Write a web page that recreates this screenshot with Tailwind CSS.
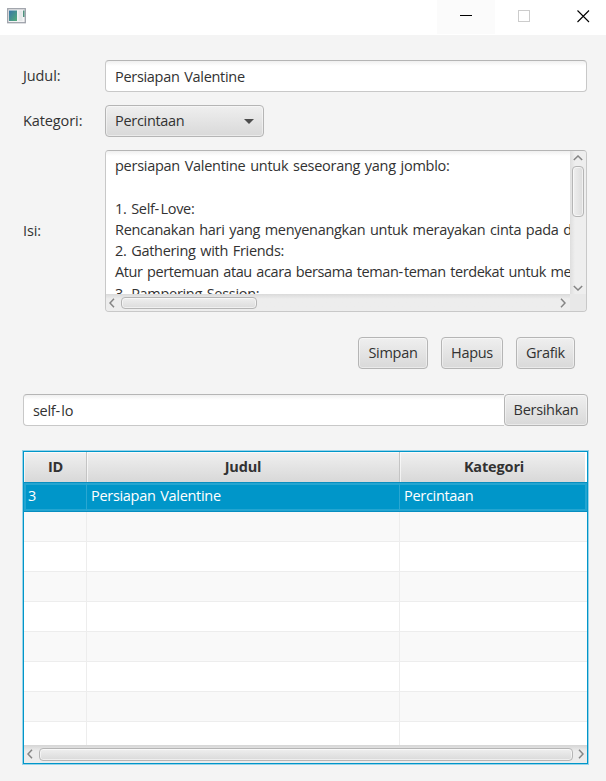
<!DOCTYPE html>
<html lang="id">
<head>
<meta charset="utf-8">
<title>Catatan</title>
<script src="https://cdn.jsdelivr.net/npm/@tailwindcss/browser@4"></script>
</head>
<body class="w-[606px] h-[781px] overflow-hidden bg-[#f4f4f4] font-['Open_Sans',sans-serif] text-[14.5px] leading-[20px] tracking-[-0.3px] [word-spacing:1.2px] text-[#323232]">
<header class="h-[35px] bg-white flex">
  <svg class="mt-[8px] ml-[7px]" width="19" height="16" viewBox="0 0 19 16">
    <defs><linearGradient id="g" x2="1" y2="1"><stop stop-color="#3975a8"/><stop offset="1" stop-color="#54ad79"/></linearGradient></defs>
    <rect x=".7" y=".7" width="17.6" height="14" fill="#f4f4f5" stroke="#9ea2aa" stroke-width="1.3"/>
    <rect x="2" y="2.5" width="8" height="10.5" fill="url(#g)"/><rect x="11.5" y="2.5" width="4" height="10.5" fill="#e5e8e9"/><rect x="16" y="2.5" width="1.5" height="6.5" fill="#4f927f"/>
  </svg>
  <div class="ml-auto w-[58px] h-[34px] bg-[#fbfbfb] pt-[15px] pl-[23px]"><div class="w-[12px] h-px bg-black"></div></div>
  <div class="w-[58px] pt-[10px] pl-[23px]"><div class="size-[12px] border border-[#ccc]"></div></div>
  <svg class="w-[53px] pl-[24px] pt-[10px] h-[24px]" width="53" height="24" viewBox="0 0 29 14"><path d="M.5 .5L12 12M12 .5L.5 12" stroke="#000" stroke-width="1.1"/></svg>
</header>
<main class="pl-[23px] pt-[25px]">
  <div class="flex items-center h-[32px]">
    <label class="w-[82px] tracking-[-0.1px]">Judul:</label>
    <div class="w-[482px] h-[32px] rounded-[4px] border border-[#c8c8c8] border-t-[#b5b5b5] bg-linear-to-b from-[#f0f0f0] to-white to-[5px] pl-[9px] pt-[6px]">Persiapan Valentine</div>
  </div>
  <div class="flex items-center h-[32px] mt-[13px]">
    <label class="w-[82px] tracking-[-0.1px]">Kategori:</label>
    <div class="w-[159px] h-[32px] rounded-[4px] border border-[#b5b5b5] bg-linear-to-b from-[#efefef] to-[#d9d9d9] shadow-[inset_0_0_0_1px_#ffffff70] pl-[9px] pr-[9px] flex items-center justify-between"><span>Percintaan</span>
      <svg width="10" height="5" viewBox="0 0 10 5"><path d="M0 0H10L5 5Z" fill="#4d4d4d"/></svg></div>
  </div>
  <div class="flex items-center h-[162px] mt-[13px]">
    <label class="w-[82px] tracking-[-0.1px]">Isi:</label>
    <div class="w-[482px] h-[162px] rounded-[4px] border border-[#c8c8c8] border-t-[#b5b5b5] overflow-hidden grid grid-cols-[464px_16px] grid-rows-[143px_17px] bg-[#ececec]">
      <div class="overflow-hidden whitespace-pre pl-[9px] pt-[4px] leading-[21.3px] bg-linear-to-b from-[#f0f0f0] to-white to-[5px]"><p class="tracking-[-0.27px]">persiapan Valentine untuk seseorang yang jomblo:</p><p>&nbsp;</p><p>1. Self<span class="tracking-[1.2px]">-</span>Love:</p><p>Rencanakan hari yang menyenangkan untuk merayakan cinta pada diri</p><p>2. Gathering with Friends:</p><p class="tracking-[-0.42px]">Atur pertemuan atau acara bersama teman<span class="tracking-[1px]">-</span>teman terdekat untuk merayakan</p><p>3. Pampering Session:</p></div>
      <div class="bg-linear-to-r from-[#dedede] to-[#eee] to-[5px] flex flex-col items-center pt-[4px]">
        <svg width="10" height="6" viewBox="0 0 10 6" fill="none" stroke="#858585" stroke-width="1.5"><path d="M.8 5L5 1L9.2 5"/></svg>
        <div class="mt-[5px] w-[12px] h-[51px] rounded-[4px] border border-[#b5b5b5] shadow-[inset_0_0_0_1px_#ffffff90] bg-linear-to-r from-[#efefef] to-[#dcdcdc]"></div>
        <svg class="mt-auto mb-[3px]" width="10" height="6" viewBox="0 0 10 6" fill="none" stroke="#858585" stroke-width="1.5"><path d="M.8 1L5 5L9.2 1"/></svg>
      </div>
      <div class="bg-linear-to-b from-[#dadada] to-[#ededed] to-[5px] flex items-center pl-[3px] pr-[4px]">
        <svg width="6" height="10" viewBox="0 0 6 10" fill="none" stroke="#858585" stroke-width="1.5"><path d="M5 .8L1 5L5 9.2"/></svg>
        <div class="ml-[5.5px] w-[136px] h-[12px] rounded-[4px] border border-[#b5b5b5] shadow-[inset_0_0_0_1px_#ffffff90] bg-linear-to-b from-[#efefef] to-[#dcdcdc]"></div>
        <svg class="ml-auto" width="6" height="10" viewBox="0 0 6 10" fill="none" stroke="#858585" stroke-width="1.5"><path d="M1 .8L5 5L1 9.2"/></svg>
      </div>
      <div class="bg-[#e8e8e8]"></div>
    </div>
  </div>
  <div class="flex gap-[13px] mt-[25px] ml-[335px]">
    <button class="w-[70px] h-[32px] rounded-[4px] border border-[#b5b5b5] bg-linear-to-b from-[#efefef] to-[#d9d9d9] shadow-[inset_0_0_0_1px_#ffffff70]">Simpan</button>
    <button class="w-[62px] h-[32px] rounded-[4px] border border-[#b5b5b5] bg-linear-to-b from-[#efefef] to-[#d9d9d9] shadow-[inset_0_0_0_1px_#ffffff70]">Hapus</button>
    <button class="w-[59px] h-[32px] rounded-[4px] border border-[#b5b5b5] bg-linear-to-b from-[#efefef] to-[#d9d9d9] shadow-[inset_0_0_0_1px_#ffffff70]">Grafik</button>
  </div>
  <div class="flex mt-[25px]">
    <div class="w-[481px] h-[32px] rounded-l-[4px] border border-r-0 border-[#c8c8c8] border-t-[#b5b5b5] bg-linear-to-b from-[#f0f0f0] to-white to-[5px] pl-[9px] pt-[6px]">self<span class="tracking-[1.2px]">-</span>lo</div>
    <button class="w-[84px] h-[32px] rounded-[4px] border border-[#b5b5b5] bg-linear-to-b from-[#efefef] to-[#d9d9d9] shadow-[inset_0_0_0_1px_#ffffff70]">Bersihkan</button>
  </div>
  <div class="mt-[25px] w-[565px] h-[313px] border border-[#0096c9] shadow-[0_0_0_1px_#98d3e9] bg-white overflow-hidden flex flex-col">
    <div class="grid grid-cols-[63px_313px_187px] h-[30px] shrink-0 text-center font-bold tracking-[-0.15px] leading-[30px] bg-linear-to-b from-[#f0f0f0] to-[#d8d8d8]">
      <div class="border-r border-[#c4c4c4] shadow-[inset_1px_1px_0_#ffffffa0] pl-px">ID</div><div class="border-r border-[#c4c4c4] shadow-[inset_1px_1px_0_#ffffffa0]">Judul</div><div class="border-r-2 border-white shadow-[inset_1px_1px_0_#ffffffa0] pl-[3px]">Kategori</div>
    </div>
    <div class="grid grid-cols-[63px_313px_187px] h-[30px] shrink-0 bg-[#0096c9] text-white leading-[26px] border-y border-[#078ec0] shadow-[inset_0_0_0_2px_#24a5d1]">
      <div class="pl-[4px] border-r border-[#2aa7d2]">3</div><div class="pl-[4px] border-r border-[#2aa7d2]">Persiapan Valentine</div><div class="pl-[4px]">Percintaan</div>
    </div>
    <div class="grid grid-cols-[63px_313px_187px] auto-rows-[30px] h-[233px] overflow-hidden" id="rows"></div>
    <div class="h-[18px] shrink-0 bg-linear-to-b from-[#d5d5d5] to-[#ececec] to-[6px] flex items-center pl-[3px] pr-[3px]">
      <svg width="6" height="10" viewBox="0 0 6 10" fill="none" stroke="#858585" stroke-width="1.5"><path d="M5 .8L1 5L5 9.2"/></svg>
      <div class="ml-[6px] w-[534px] h-[13px] rounded-[4px] border border-[#b5b5b5] shadow-[inset_0_0_0_1px_#ffffff90] bg-linear-to-b from-[#efefef] to-[#dadada]"></div>
      <svg class="ml-auto" width="6" height="10" viewBox="0 0 6 10" fill="none" stroke="#858585" stroke-width="1.5"><path d="M1 .8L5 5L1 9.2"/></svg>
    </div>
  </div>
</main>
<script>
const rows = document.getElementById('rows');
for (let r = 0; r < 8; r++) for (let c = 0; c < 3; c++) {
  const d = document.createElement('div');
  d.className = (r % 2 ? 'bg-white' : 'bg-[#f9f9f9]') + ' border-b border-[#ededed]' + (c < 2 ? ' border-r' : '');
  rows.appendChild(d);
}
</script>
</body>
</html>
